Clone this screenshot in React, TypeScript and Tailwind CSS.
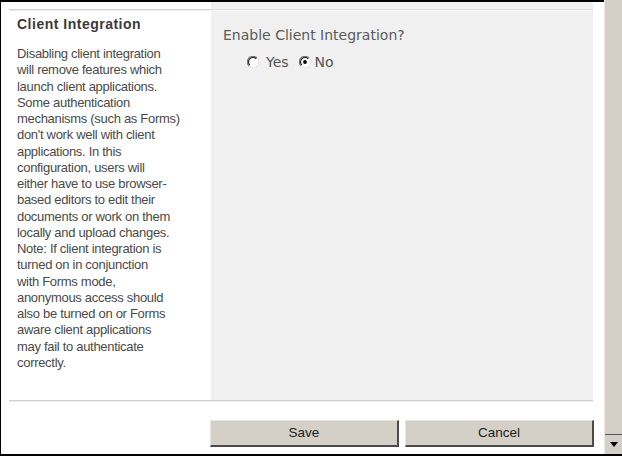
import React from "react";

const lines = [
  "Disabling client integration",
  "will remove features which",
  "launch client applications.",
  "Some authentication",
  "mechanisms (such as Forms)",
  "don't work well with client",
  "applications. In this",
  "configuration, users will",
  "either have to use browser-",
  "based editors to edit their",
  "documents or work on them",
  "locally and upload changes.",
  "Note: If client integration is",
  "turned on in conjunction",
  "with Forms mode,",
  "anonymous access should",
  "also be turned on or Forms",
  "aware client applications",
  "may fail to authenticate",
  "correctly.",
];

function Radio({ checked }: { checked?: boolean }) {
  return (
    <svg width="12" height="12" viewBox="0 0 12 12" className="shrink-0">
      <circle cx="6" cy="6" r="5.5" fill="#ffffff" />
      <path d="M10 2 A5.5 5.5 0 0 0 2 10" fill="none" stroke="#7a7a7a" strokeWidth="1.2" />
      <path d="M9.2 2.8 A4.4 4.4 0 0 0 2.8 9.2" fill="none" stroke="#2a2a2a" strokeWidth="1.2" />
      <path d="M10 2 A5.5 5.5 0 0 1 2 10" fill="none" stroke="#e4e2dc" strokeWidth="1" />
      {checked && <circle cx="6" cy="6" r="1.9" fill="#000000" />}
    </svg>
  );
}

function Button({ label }: { label: string }) {
  return (
    <button className="w-[189px] h-[27px] bg-[#d4d0c8] border-t border-l border-[#e6e4de] border-b-2 border-r-2 border-b-[#4a4a4a] border-r-[#4a4a4a] text-[13.5px] text-[#1c1c1c] font-['Liberation_Sans',sans-serif] leading-none">
      {label}
    </button>
  );
}

export default function App() {
  return (
    <div className="w-[622px] h-[456px] flex flex-col bg-white">
      <div className="flex h-[454px]">
        <div className="w-[604px] border-t-2 border-l border-black flex flex-col">
          <div className="flex h-[398px]">
            <div className="w-[210px] pl-[8px] font-['Liberation_Sans',sans-serif]">
              <div className="mt-[7px] h-[2px] border-t border-[#d2d2d2] bg-[#ececec]" />
              <div className="pl-[8px] mt-[5px] text-[14px] leading-[16px] font-bold tracking-[0.5px] text-[#3a3a3a]">
                Client Integration
              </div>
              <div className="pl-[8px] mt-[14px] text-[13px] leading-[16.25px] tracking-[-0.3px] text-[#4a4a4a] whitespace-nowrap">
                {lines.map((l) => (
                  <div key={l}>{l}</div>
                ))}
              </div>
            </div>
            <div className="w-[382px] bg-[#f0f0f0] font-['DejaVu_Sans',sans-serif]">
              <div className="mt-[7px] h-[2px] border-t border-[#dadada] bg-[#f6f6f6]" />
              <div className="pl-[12px] mt-[16px] text-[14px] leading-[16px] text-[#5a5a5a]">
                Enable Client Integration?
              </div>
              <div className="pl-[36px] mt-[11px] flex items-center text-[14px] leading-[16px] text-[#555555]">
                <Radio />
                <span className="ml-[7px]">Yes</span>
                <span className="ml-[10px]">
                  <Radio checked />
                </span>
                <span className="ml-[4px]">No</span>
              </div>
            </div>
          </div>
          <div className="ml-[8px] w-[584px] h-[2px] border-t border-[#cfcfcf] bg-[#ececec]" />
          <div className="mt-[18px] ml-[209px] flex gap-[6px]">
            <Button label="Save" />
            <Button label="Cancel" />
          </div>
        </div>
        <div className="w-[18px] flex flex-col bg-[#d4d0c8] border-l border-[#eceae5]">
          <div className="flex-1" />
          <div className="h-[20px] border-t border-[#555555] flex items-center justify-center">
            <svg width="8" height="5" viewBox="0 0 8 5">
              <path d="M0 0 H8 L4 5 Z" fill="#000000" />
            </svg>
          </div>
        </div>
      </div>
      <div className="h-[2px] bg-black" />
    </div>
  );
}
